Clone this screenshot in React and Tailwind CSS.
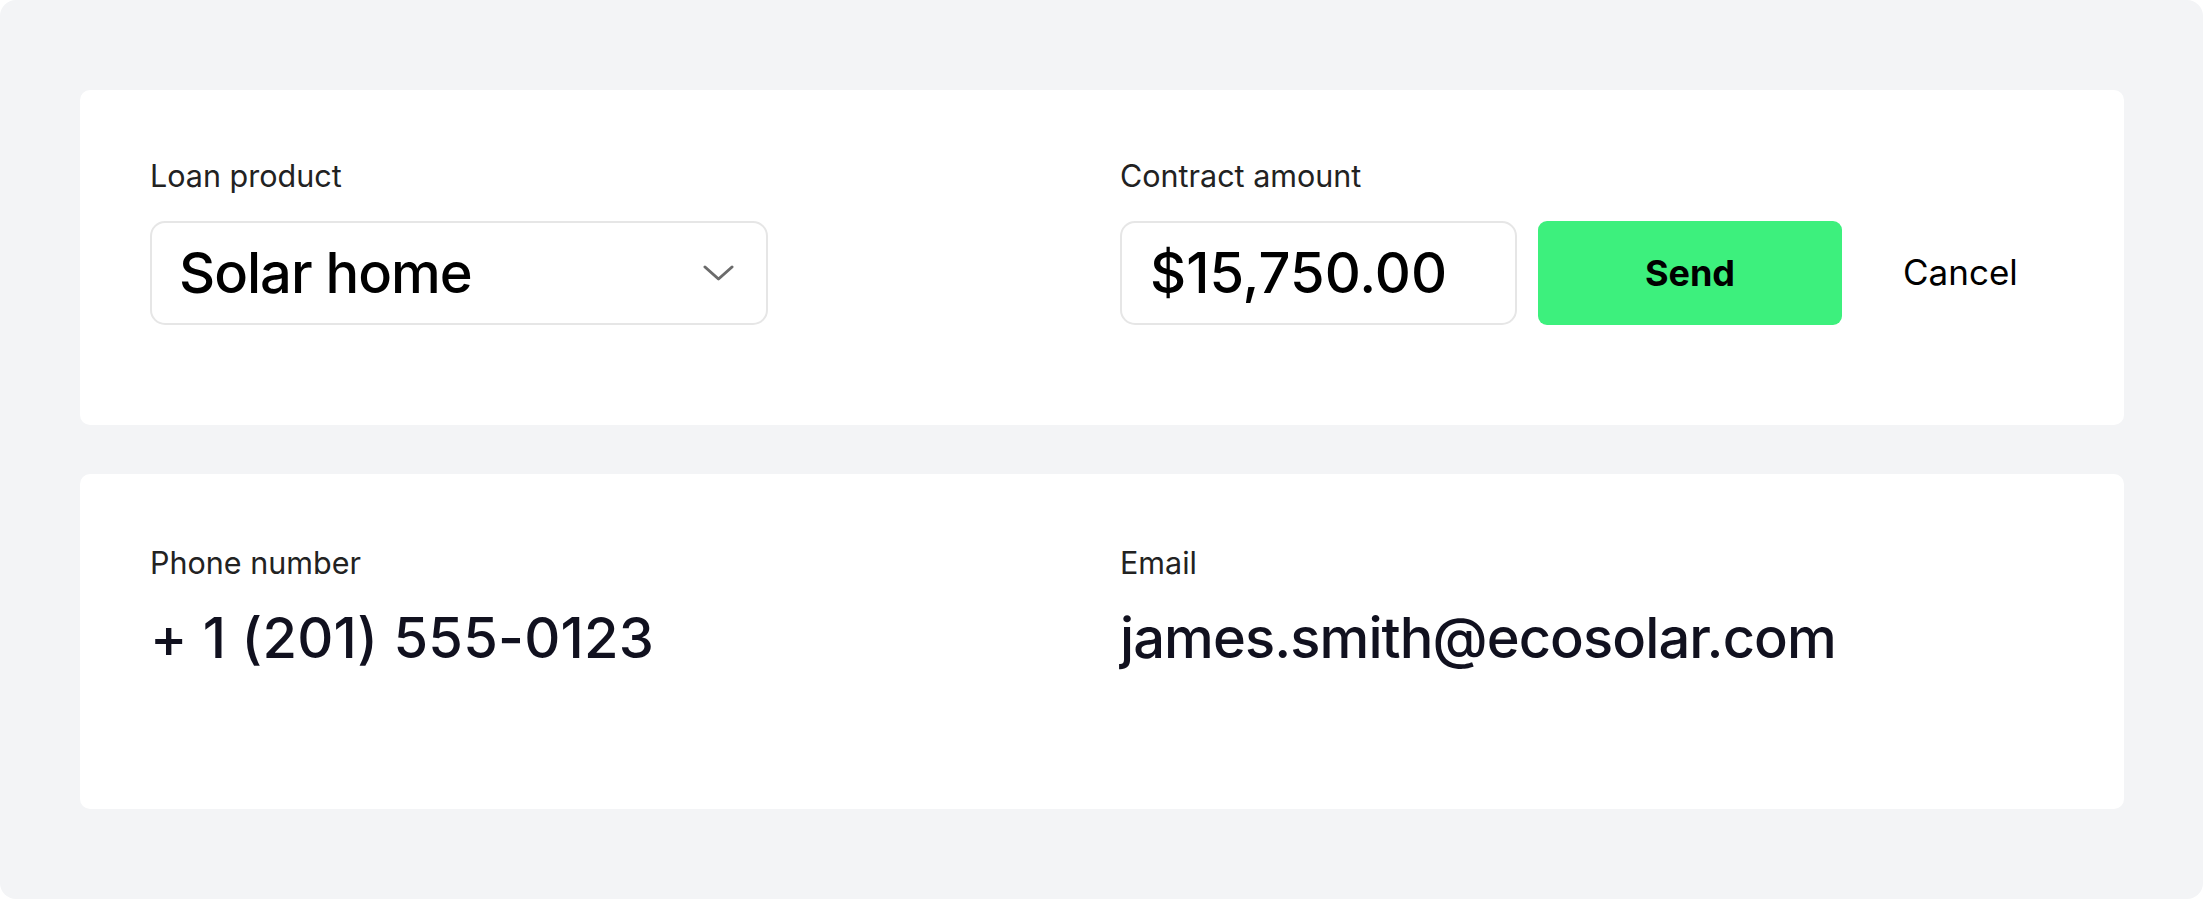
import React from 'react';

const font = { fontFamily: 'Inter, "Noto Sans", sans-serif' };

const Chevron = () => (
  <svg width="31" height="16" viewBox="0 0 31 16" fill="none">
    <polyline points="2,2 15.5,14 29,2" stroke="#6b6b6b" strokeWidth="3" strokeLinecap="round" strokeLinejoin="round" />
  </svg>
);

const Label = ({ children }) => (
  <div className="text-[30.5px] leading-none text-[#222222]">{children}</div>
);

const App = () => {
  return (
    <div className="w-[2206px] h-[901px] bg-white" style={font}>
      <div className="w-[2203px] h-[899px] bg-[#f3f4f6] rounded-[16px] pl-[80px] pr-[79px] pt-[90px] flex flex-col gap-[49px]">
        {/* loan card */}
        <section className="bg-white rounded-[10px] h-[335px] px-[70px] pt-[71px]">
          <div className="grid grid-cols-2 gap-x-[36px]">
            <div>
              <Label>Loan product</Label>
              <div className="mt-[29px] w-[618px] h-[104px] border-2 border-[#e6e6e6] rounded-[15px] flex items-center justify-between pl-[27px] pr-[32px]">
                <span className="text-[56px] leading-none font-medium tracking-[-1px] text-black">Solar home</span>
                <Chevron />
              </div>
            </div>
            <div>
              <Label>Contract amount</Label>
              <div className="mt-[29px] flex items-center">
                <div className="w-[397px] h-[104px] border-2 border-[#e6e6e6] rounded-[15px] flex items-center pl-[28px]">
                  <span className="text-[56px] leading-none font-medium text-black">$15,750.00</span>
                </div>
                <button className="ml-[21px] w-[304px] h-[104px] rounded-[9px] bg-[#3df07d] text-[36px] font-bold text-black">
                  Send
                </button>
                <button className="ml-[61px] text-[35px] text-black">Cancel</button>
              </div>
            </div>
          </div>
        </section>

        {/* contact card */}
        <section className="bg-white rounded-[10px] h-[335px] px-[70px] pt-[74px]">
          <div className="grid grid-cols-2 gap-x-[36px]">
            <div>
              <Label>Phone number</Label>
              <div className="mt-[31px] text-[56px] leading-none font-medium tracking-[0.25px] text-[#11111f]">+ 1 (201) 555-0123</div>
            </div>
            <div>
              <Label>Email</Label>
              <div className="mt-[31px] text-[56px] leading-none font-medium tracking-[-0.9px] text-[#11111f]">james.smith@ecosolar.com</div>
            </div>
          </div>
        </section>
      </div>
    </div>
  );
};

export default App;
